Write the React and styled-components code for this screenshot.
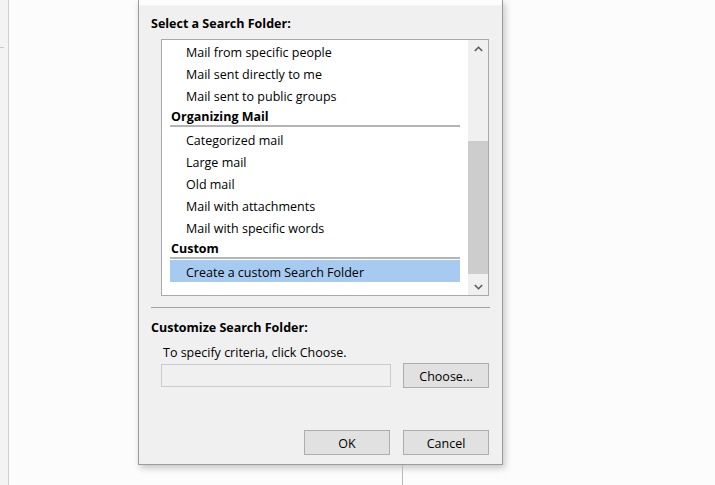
import React from "react";
import styled, { createGlobalStyle } from "styled-components";

const GlobalStyle = createGlobalStyle`
  html, body {
    margin: 0;
    padding: 0;
    background: #fbfcfb;
    font-family: "Open Sans", "Noto Sans", sans-serif;
    font-size: 12.5px;
    color: #000;
  }
  * {
    box-sizing: border-box;
  }
`;

const folders = [
  { type: "item", label: "Mail from specific people" },
  { type: "item", label: "Mail sent directly to me" },
  { type: "item", label: "Mail sent to public groups" },
  { type: "group", label: "Organizing Mail" },
  { type: "item", label: "Categorized mail" },
  { type: "item", label: "Large mail" },
  { type: "item", label: "Old mail" },
  { type: "item", label: "Mail with attachments" },
  { type: "item", label: "Mail with specific words" },
  { type: "group", label: "Custom" },
  { type: "item", label: "Create a custom Search Folder", selected: true },
];

const Chevron = ({ down }) => (
  <svg width="9" height="6" viewBox="0 0 9 6">
    <polyline
      points={down ? "0.8,1 4.5,4.7 8.2,1" : "0.8,5 4.5,1.3 8.2,5"}
      fill="none"
      stroke="#5c5862"
      strokeWidth="1.6"
    />
  </svg>
);

export default function App() {
  return (
    <Page>
      <GlobalStyle />
      <SideRail>
        <RailTick />
      </SideRail>
      <Workspace>
        <Dialog>
          <TitleStrip />
          <DialogBody>
            <SectionLabel>Select a Search Folder:</SectionLabel>
            <ListBox>
              <ListContent>
                {folders.map((f) =>
                  f.type === "group" ? (
                    <GroupHeader key={f.label}>
                      <span>{f.label}</span>
                    </GroupHeader>
                  ) : (
                    <ListItem key={f.label} $selected={f.selected}>
                      {f.label}
                    </ListItem>
                  )
                )}
              </ListContent>
              <ScrollBar>
                <ScrollArrow>
                  <Chevron />
                </ScrollArrow>
                <ScrollTrack>
                  <ScrollThumb $offset={84} $size={133} />
                </ScrollTrack>
                <ScrollArrow>
                  <Chevron down />
                </ScrollArrow>
              </ScrollBar>
            </ListBox>
            <Separator />
            <SectionLabel $gap={12}>Customize Search Folder:</SectionLabel>
            <Hint>To specify criteria, click Choose.</Hint>
            <CriteriaRow>
              <CriteriaBox />
              <Button>Choose...</Button>
            </CriteriaRow>
            <Footer>
              <Button>OK</Button>
              <Button>Cancel</Button>
            </Footer>
          </DialogBody>
        </Dialog>
        <ColumnLine />
      </Workspace>
    </Page>
  );
}

const Page = styled.div`
  display: flex;
  height: 485px;
  overflow: hidden;
`;

const SideRail = styled.div`
  width: 9px;
  flex-shrink: 0;
  background: #f3f3f3;
  border-right: 1px solid #cfcfcf;
`;

const RailTick = styled.div`
  width: 4px;
  height: 48px;
  border-bottom: 1px solid #c6c6c6;
`;

const Workspace = styled.div`
  flex: 1;
  display: flex;
  flex-direction: column;
`;

const Dialog = styled.div`
  width: 365px;
  height: 466px;
  margin-left: 129px;
  display: flex;
  flex-direction: column;
  background: #f0f0f0;
  border: 1px solid #9b9b9b;
  border-top: none;
  box-shadow: 2px 3px 7px rgba(0, 0, 0, 0.22);
`;

const TitleStrip = styled.div`
  height: 6px;
  background: #fdfdfd;
  border-bottom: 1px solid #f6f6f6;
`;

const DialogBody = styled.div`
  display: flex;
  flex-direction: column;
  padding: 10px 12px 0;
`;

const SectionLabel = styled.div`
  font-weight: 700;
  line-height: 16px;
  margin-top: ${(p) => p.$gap || 0}px;
`;

const ListBox = styled.div`
  display: flex;
  width: 328px;
  height: 257px;
  margin: 7px 0 0 10px;
  background: #fff;
  border: 1px solid #a9a9a9;
`;

const ListContent = styled.div`
  flex: 1;
  padding: 0 8px;
`;

const ListItem = styled.div`
  height: 22px;
  padding: 4px 0 0 16px;
  line-height: 18px;
  white-space: nowrap;
  background: ${(p) => (p.$selected ? "#a6caf0" : "transparent")};
`;

const GroupHeader = styled.div`
  height: 22px;
  padding-top: 2px;
  span {
    display: block;
    height: 19px;
    padding: 1px 0 0 1px;
    line-height: 16px;
    font-weight: 700;
    border-bottom: 2px solid #b4b4b4;
  }
`;

const ScrollBar = styled.div`
  width: 20px;
  display: flex;
  flex-direction: column;
  background: #f0f0f0;
`;

const ScrollArrow = styled.div`
  height: 17px;
  display: flex;
  align-items: center;
  justify-content: center;
`;

const ScrollTrack = styled.div`
  flex: 1;
  display: flex;
  flex-direction: column;
`;

const ScrollThumb = styled.div`
  margin-top: ${(p) => p.$offset}px;
  height: ${(p) => p.$size}px;
  background: #cdcdcd;
`;

const Separator = styled.div`
  height: 1px;
  margin-top: 11px;
  background: #a0a0a0;
`;

const Hint = styled.div`
  line-height: 16px;
  margin: 9px 0 0 12px;
`;

const CriteriaRow = styled.div`
  display: flex;
  align-items: center;
  gap: 12px;
  height: 25px;
  margin: 2px 1px 0 10px;
`;

const CriteriaBox = styled.div`
  width: 230px;
  height: 23px;
  background: #f0f0f0;
  border: 1px solid #cccccc;
`;

const Button = styled.div`
  width: 86px;
  height: 25px;
  padding-top: 1px;
  display: flex;
  align-items: center;
  justify-content: center;
  background: #e1e1e1;
  border: 1px solid #adadad;
`;

const Footer = styled.div`
  display: flex;
  justify-content: flex-end;
  gap: 13px;
  margin: 42px 1px 0 0;
`;

const ColumnLine = styled.div`
  width: 1px;
  height: 20px;
  margin-left: 393px;
  background: #b9b9b9;
`;
